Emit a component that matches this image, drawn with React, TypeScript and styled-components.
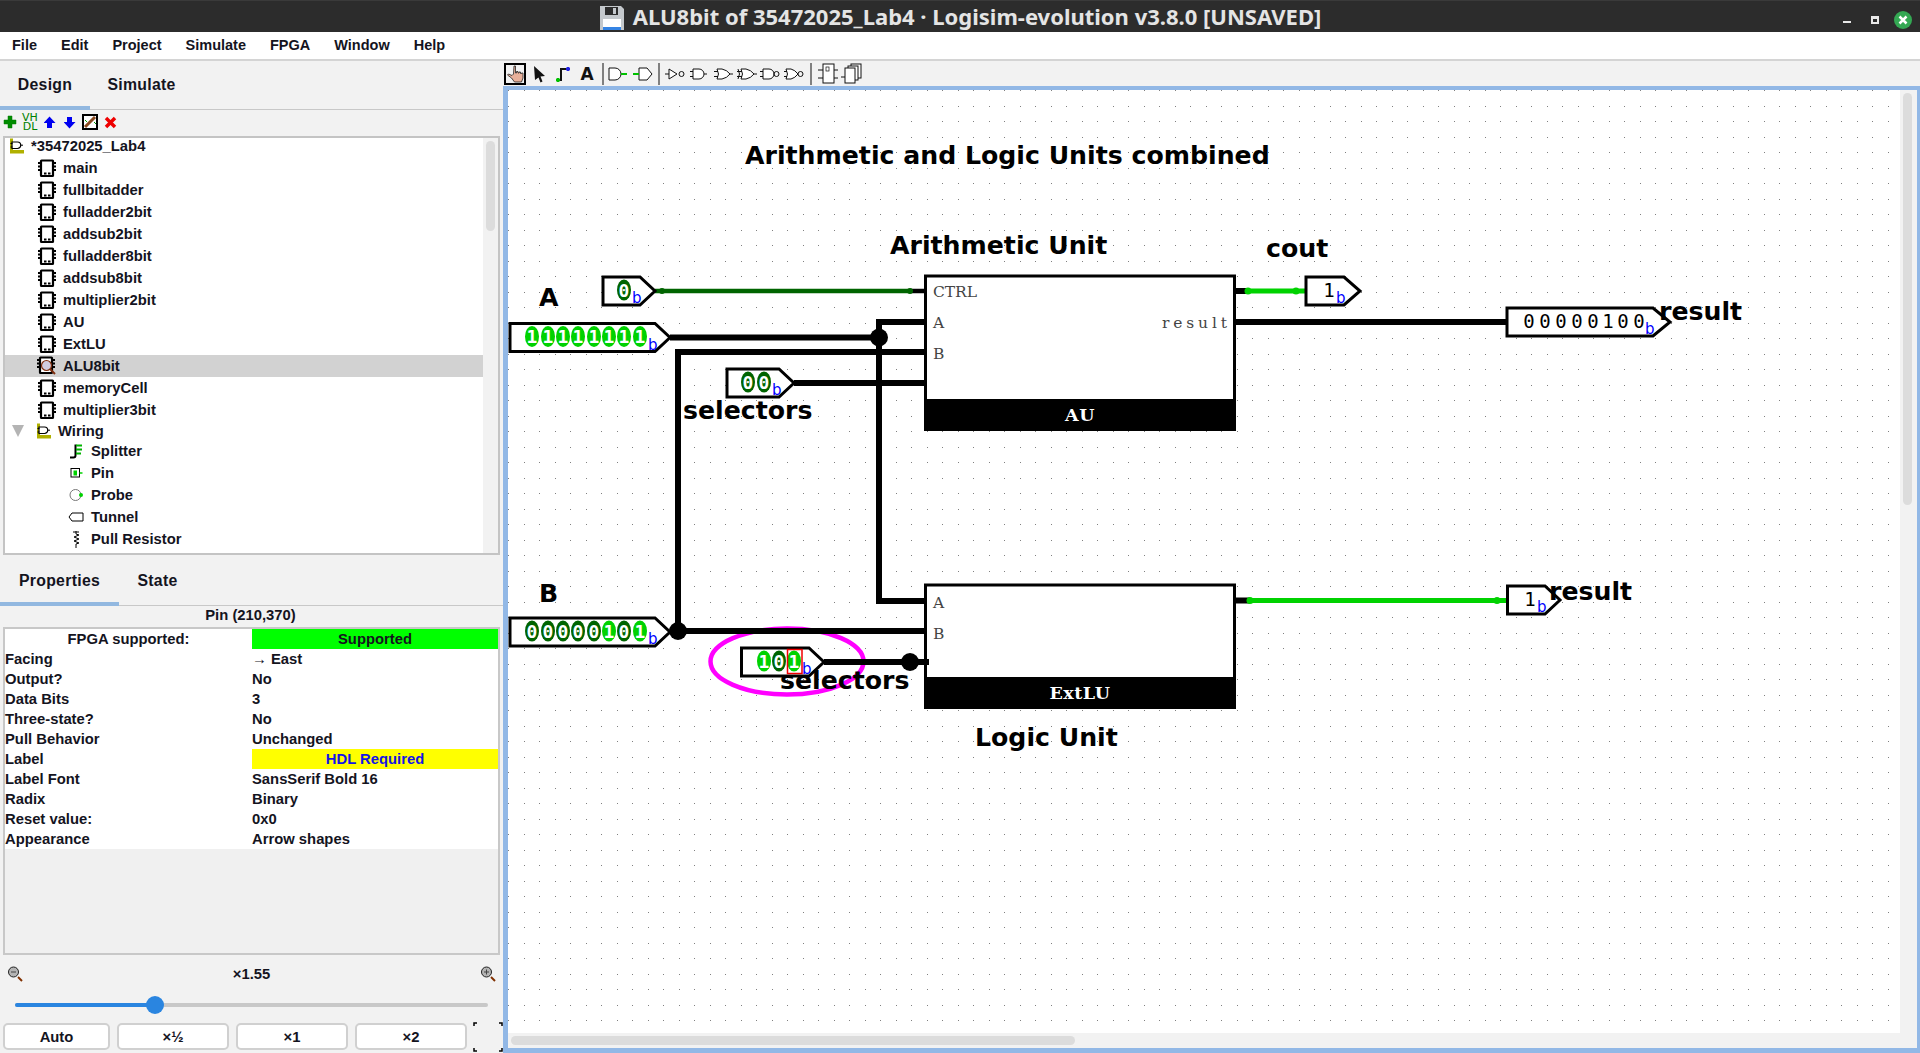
import React from 'react'
import styled, { createGlobalStyle } from 'styled-components'

const GlobalStyle = createGlobalStyle`
    html, body {
        margin: 0;
        padding: 0;
        background: #f2f2f2;
        overflow: hidden;
    }
    * {
        box-sizing: border-box;
    }
`

const Window = styled.div`
    width: 1920px;
    height: 1053px;
    display: flex;
    flex-direction: column;
    overflow: hidden;
    font-family: "Liberation Sans", Arial, sans-serif;
    font-weight: bold;
    font-size: 14.8px;
    color: #14141e;
`

const TitleBar = styled.div`
    height: 32px;
    flex: none;
    display: grid;
    grid-template-columns: 1fr auto 1fr;
    align-items: center;
    background: #2c2c2c;
    border-top: 1px solid #3a3a3a;
`

const TitleText = styled.div`
    grid-column: 2;
    display: flex;
    align-items: center;
    gap: 8px;
    padding-bottom: 3px;
    color: #e4e4e4;
    font-family: "Noto Sans", sans-serif;
    font-size: 22px;
    white-space: nowrap;
`

const TitleLabel = styled.span`
    margin-bottom: 4px;
`

const WindowControls = styled.div`
    justify-self: end;
    display: flex;
    align-items: center;
    padding-right: 8px;
`

const MinimizeBtn = styled.div`
    width: 8px;
    height: 2px;
    margin: 5px 20px 0 0;
    background: #e8e8e8;
`

const MaximizeBtn = styled.div`
    width: 8px;
    height: 8px;
    margin-right: 15px;
    border: 2px solid #e8e8e8;
    border-top-width: 3px;
    background: #2c2c2c;
`

const CloseBtn = styled.div`
    width: 18px;
    height: 18px;
    border-radius: 50%;
    background: #34a853;
    display: flex;
    align-items: center;
    justify-content: center;
`

const MenuBar = styled.div`
    height: 29px;
    flex: none;
    display: flex;
    align-items: center;
    background: #fff;
    border-bottom: 2px solid #d4d4d4;
    padding: 0 0 2px 0;
    font-size: 14.5px;
`

const MenuItem = styled.div`
    padding: 0 12px;
`

const Main = styled.div`
    flex: 1;
    display: flex;
    min-height: 0;
`

const Sidebar = styled.div`
    width: 503px;
    flex: none;
    display: flex;
    flex-direction: column;
    background: #f2f2f2;
`

const TabStrip = styled.div<{ $h: number }>`
    height: ${p => p.$h}px;
    flex: none;
    display: flex;
    border-bottom: 1px solid #c8c8c8;
`

const Tab = styled.div<{ $active?: boolean; $w: number; $top?: number }>`
    width: ${p => p.$w}px;
    display: flex;
    align-items: center;
    justify-content: center;
    padding-top: ${p => p.$top ?? 2}px;
    font-size: 15.8px;
    letter-spacing: 0.3px;
    margin-bottom: -1px;
    border-bottom: 4px solid ${p => (p.$active ? '#92b8e0' : 'transparent')};
`

const MiniToolbar = styled.div`
    height: 26px;
    flex: none;
    display: flex;
    align-items: center;
    padding-bottom: 2px;
`

const MiniTool = styled.div`
    width: 20px;
    height: 20px;
    display: flex;
    align-items: center;
    justify-content: center;
`

const VhdlMark = styled.span`
    text-align: center;
    font-family: "DejaVu Sans", sans-serif;
    font-weight: normal;
    font-size: 11px;
    line-height: 9px;
    color: #008000;
`

const Tree = styled.div`
    height: 419px;
    flex: none;
    margin: 0 3px;
    display: flex;
    background: #fff;
    border: 2px solid #c4c4c4;
`

const TreeRows = styled.div`
    flex: 1;
    overflow: hidden;
`

const TreeRow = styled.div<{ $indent: number; $h?: number; $selected?: boolean; $bottom?: number }>`
    height: ${p => p.$h ?? 22}px;
    display: flex;
    align-items: center;
    padding-left: ${p => p.$indent}px;
    padding-bottom: ${p => p.$bottom ?? 0}px;
    background: ${p => (p.$selected ? '#d2d2d2' : 'transparent')};
    white-space: nowrap;
`

const RowIcon = styled.span<{ $gap: number }>`
    width: 22px;
    margin-right: ${p => p.$gap}px;
    display: flex;
    align-items: center;
    justify-content: center;
    flex: none;
`

const LibraryName = styled.span`
    margin-left: 6px;
`

const Triangle = styled.span`
    width: 0;
    height: 0;
    margin: 0 12px 0 7px;
    border-left: 6.5px solid transparent;
    border-right: 6.5px solid transparent;
    border-top: 12px solid #b4b4b4;
`

const ScrollTrackV = styled.div`
    width: 15px;
    flex: none;
    background: #f2f2f2;
    padding: 3px 3px 0;
`

const ScrollThumbV = styled.div<{ $h: number }>`
    height: ${p => p.$h}px;
    border-radius: 5px;
    background: #dcdcdc;
`

const PropTitle = styled.div`
    height: 21px;
    flex: none;
    display: flex;
    align-items: center;
    justify-content: center;
    padding: 0 2px 4px 0;
`

const PropTable = styled.div`
    height: 328px;
    flex: none;
    margin: 0 3px;
    background: #f0f0f0;
    border: 2px solid #c8c8c8;
`

const PropRow = styled.div`
    height: 20px;
    display: grid;
    grid-template-columns: 247px 246px;
    background: #fff;
`

const PropCell = styled.div<{ $bg?: string; $center?: boolean; $color?: string }>`
    display: flex;
    align-items: center;
    background: ${p => p.$bg ?? 'transparent'};
    color: ${p => p.$color ?? 'inherit'};
    justify-content: ${p => (p.$center ? 'center' : 'flex-start')};
    white-space: nowrap;
`

const ZoomHeader = styled.div`
    height: 38px;
    flex: none;
    padding: 0 7px;
    display: flex;
    align-items: center;
    justify-content: space-between;
`

const SliderTrack = styled.div`
    position: relative;
    height: 4px;
    flex: none;
    margin: 10px 15px 0;
    width: 473px;
    border-radius: 2px;
    background: #c8c8c8;
`

const SliderFill = styled.div`
    height: 100%;
    border-radius: 2px;
    background: #2a85e0;
`

const SliderThumb = styled.div`
    position: absolute;
    top: -7px;
    width: 18px;
    height: 18px;
    margin-left: -9px;
    border-radius: 50%;
    background: #2a85e0;
`

const ZoomButtons = styled.div`
    display: flex;
    gap: 7px;
    margin: 16px 0 0 3px;
`

const ZoomButton = styled.div<{ $w: number }>`
    width: ${p => p.$w}px;
    height: 27px;
    display: flex;
    align-items: center;
    justify-content: center;
    background: #fff;
    border: 2px solid #d0d0d0;
    border-radius: 5px;
`

const Corners = styled.svg`
    flex: none;
    margin: -1px 0 0 -1px;
`

const CanvasColumn = styled.div`
    flex: 1;
    min-width: 0;
    display: flex;
    flex-direction: column;
`

const CanvasToolbar = styled.div`
    height: 25px;
    flex: none;
    display: flex;
    align-items: center;
    background: #f2f2f2;
`

const ToolSlot = styled.div<{ $active?: boolean }>`
    width: 24px;
    height: 24px;
    flex: none;
    display: flex;
    align-items: center;
    justify-content: center;
    ${p => (p.$active ? 'border: 2px solid #000; width: 22px; height: 22px; margin: 0 1px;' : '')}
`

const ToolSeparator = styled.div`
    width: 2px;
    height: 22px;
    margin: 0 3px;
    background: #808080;
`

const ToolLetter = styled.span`
    font-family: "DejaVu Sans", sans-serif;
    font-size: 17px;
    color: #111;
`

const CanvasFrame = styled.div`
    flex: 1;
    min-height: 0;
    display: grid;
    grid-template-columns: 1392px 17px;
    grid-template-rows: 943px 15px;
    border: solid #92b8e6;
    border-width: 4px 3px 5px 5px;
    background: #f2f2f2;
`

const CircuitSvg = styled.svg`
    display: block;
    background: #fff;
`

const ScrollTrackH = styled.div`
    padding: 3px 0 0 3px;
    grid-column: 1;
    grid-row: 2;
`

const ScrollThumbH = styled.div<{ $w: number }>`
    width: ${p => p.$w}px;
    height: 9px;
    border-radius: 5px;
    background: #dcdcdc;
`

const CanvasScrollV = styled.div`
    grid-column: 2;
    grid-row: 1;
    padding: 3px 5px 0 3px;
`

const HeadingText = styled.text`
    font-family: "DejaVu Sans", sans-serif;
    font-weight: bold;
    font-size: 25.2px;
    fill: #000;
`

const PortText = styled.text`
    font-family: "DejaVu Serif", serif;
    font-weight: normal;
    font-size: 15.5px;
    fill: #444;
`

const BlockName = styled.text`
    font-family: "DejaVu Serif", serif;
    font-weight: bold;
    font-size: 17.5px;
    letter-spacing: 0.5px;
    fill: #fff;
    text-anchor: middle;
`

const BitText = styled.text<{ $fill: string }>`
    font-family: "DejaVu Sans Mono", monospace;
    font-weight: bold;
    font-size: 18px;
    fill: ${p => p.$fill};
    text-anchor: middle;
`

const OutputBit = styled.text`
    font-family: "DejaVu Sans Mono", monospace;
    font-weight: normal;
    font-size: 19px;
    fill: #000;
    text-anchor: middle;
`

const RadixText = styled.text`
    font-family: "DejaVu Sans", sans-serif;
    font-weight: normal;
    font-size: 15px;
    fill: #0000ff;
`

const ON = '#00d200'
const OFF = '#006400'

const ChipIcon = () => (
    <svg width="18" height="19" viewBox="0 0 18 19">
        <rect x="3" y="1.5" width="12" height="15.5" rx="0.5" fill="#fff" stroke="#000" strokeWidth="2.2" />
        <path d="M0 4h3M0 7.500h3M0 11h3M15 4h3M15 7.500h3M15 11h3M6 14.500h2.500M10 14.500h2.500" stroke="#000" strokeWidth="1.800" />
    </svg>
)

const ActiveChipIcon = () => (
    <svg width="20" height="20" viewBox="0 0 20 20">
        <rect x="3" y="1.5" width="12" height="15.5" rx="0.5" fill="#fff" stroke="#000" strokeWidth="2.2" />
        <path d="M0 4h3M0 7.500h3M0 11h3M15 4h3M15 7.500h3M15 11h3" stroke="#000" strokeWidth="1.800" />
        <circle cx="9.5" cy="9.5" r="5" fill="#d0cce0" stroke="#803010" strokeWidth="1.2" />
        <path d="M13 13l5 5" stroke="#803010" strokeWidth="2" />
    </svg>
)

const LibraryIcon = () => (
    <svg width="16" height="16" viewBox="0 0 16 16">
        <path d="M1 0.500h3v11.500h11v3.500H1z" fill="#b0b000" />
        <path d="M3 4h5.500a3 3 0 0 1 0 6.500H3z" fill="#fff" stroke="#000" strokeWidth="1.2" />
        <path d="M11.500 7.200h2.500M1.500 5.500h2M1.500 9h2" stroke="#000" strokeWidth="1" />
    </svg>
)

const SplitterIcon = () => (
    <svg width="14" height="16" viewBox="0 0 14 16">
        <path d="M1 14.5h3.5a2 2 0 0 0 2-2V1.5" fill="none" stroke="#000" strokeWidth="2" />
        <path d="M7 2.5h6M7 6.5h6M7 10.5h5" stroke="#00b400" strokeWidth="2" />
    </svg>
)

const PinIcon = () => (
    <svg width="13" height="12" viewBox="0 0 13 12">
        <rect x="1" y="1.5" width="8.5" height="8.5" fill="#fff" stroke="#000" />
        <rect x="3.5" y="3.5" width="3.5" height="5" fill={ON} />
        <path d="M9.5 6h3" stroke={ON} strokeWidth="1.5" />
    </svg>
)

const ProbeIcon = () => (
    <svg width="15" height="14" viewBox="0 0 15 14">
        <circle cx="6.5" cy="7" r="5.5" fill="#fff" stroke="#777" />
        <circle cx="12" cy="7" r="2" fill={ON} />
    </svg>
)

const TunnelIcon = () => (
    <svg width="16" height="10" viewBox="0 0 16 10">
        <path d="M15 1H4L1 5l3 4h11z" fill="#fff" stroke="#000" />
    </svg>
)

const ResistorIcon = () => (
    <svg width="10" height="17" viewBox="0 0 10 17">
        <path d="M5 0v3l3 1-5 2 5 2-5 2 5 2-3 1v4M2 1h6" fill="none" stroke="#000" />
    </svg>
)

const PlusIcon = () => (
    <svg width="14" height="14" viewBox="0 0 14 14">
        <path d="M5 1h4v4h4v4H9v4H5V9H1V5h4z" fill="#008c00" stroke="#007800" strokeWidth="0.5" />
    </svg>
)

const ArrowIcon = ({ down }: { down?: boolean }) => (
    <svg width="13" height="13" viewBox="1 0 13 13">
        <path d={down ? 'M4 1h5v5h3.500L6.500 12.500 0.500 6H4z' : 'M4 12h5V7h3.500L6.500 0.500 0.500 7H4z'} fill="#0000f0" />
    </svg>
)

const EditIcon = () => (
    <svg width="16" height="16" viewBox="0 0 16 16">
        <rect x="1" y="1" width="14" height="14" fill="#fff" stroke="#000" strokeWidth="2" />
        <path d="M3 13L13 3" stroke="#8a4a20" strokeWidth="3" />
        <path d="M3 6l2 2M12 8l2 2" stroke="#00a000" strokeWidth="1" />
    </svg>
)

const CrossIcon = () => (
    <svg width="13" height="13" viewBox="0 0 13 13">
        <path d="M2 2l9 9M11 2l-9 9" stroke="#ee0000" strokeWidth="3.5" />
    </svg>
)

const MagnifierIcon = ({ plus }: { plus?: boolean }) => (
    <svg width="16" height="16" viewBox="0 0 16 16">
        <circle cx="6.500" cy="6" r="5" fill="#b4b4b4" stroke="#222" />
        <path d={plus ? 'M4 6h5M6.500 3.500v5' : 'M4 6h5'} stroke="#444" strokeWidth="1" />
        <path d="M11 11l4 4" stroke="#803000" strokeWidth="2" />
    </svg>
)

const CornersIcon = () => (
    <Corners width="30" height="30" viewBox="0 0 30 30">
        <path d="M1 4V1h3M26 1h3v3M1 26v3h3M26 29h3v-3" fill="none" stroke="#000" strokeWidth="1.500" />
    </Corners>
)

const FloppyIcon = () => (
    <svg width="26" height="26" viewBox="0 0 26 26">
        <path d="M1 1h21l3 3v21H1z" fill="#c4c8cc" />
        <rect x="6" y="2" width="13" height="8" fill="#2c2c2c" />
        <rect x="14" y="3" width="3" height="6" fill="#c4c8cc" />
        <rect x="4" y="14" width="18" height="11" fill="#fff" />
        <rect x="4" y="22" width="18" height="3" fill="#3584e4" />
    </svg>
)

const HandIcon = () => (
    <svg width="18" height="18" viewBox="0 0 18 18">
        <path d="M8 1h1.500v7h1V6.500H12V8h1V7h1.500v1.500h1V8H17v5l-1.500 4h-7l-3-4-4-3 1-1 3.500 1.500L7.500 9z" fill="#e8b09a" stroke="#222" strokeWidth="0.8" />
    </svg>
)

const SelectIcon = () => (
    <svg width="16" height="18" viewBox="0 0 16 18">
        <path d="M3 1l11 10-4.500 0.500 2 5-2 1-2-5L4 15z" fill="#111" />
    </svg>
)

const WireIcon = () => (
    <svg width="18" height="18" viewBox="0 0 18 18">
        <path d="M4 15h3V4h7" fill="none" stroke="#111" strokeWidth="2" />
        <path d="M2 15h4M4 13v4" stroke="#00c000" strokeWidth="2.500" />
        <path d="M12 4h4M14 2v4" stroke="#2020e0" strokeWidth="2.500" />
    </svg>
)

const GateIcon = ({ d, extra, green }: { d: string; extra?: string; green?: string }) => (
    <svg width="24" height="20" viewBox="0 0 24 20">
        <path d={d} fill="#fff" stroke="#111" strokeWidth="1" />
        {extra && <path d={extra} fill="none" stroke="#111" strokeWidth="1" />}
        {green && <path d={green} fill="none" stroke="#00c000" strokeWidth="2" />}
    </svg>
)

const AND_PATH = 'M6 5h6a5 5 0 0 1 0 10H6z'
const OR_PATH = 'M6 5h5q5 1 8 5-3 4-8 5H6q3-5 0-10z'

const FlipFlopIcon = () => (
    <svg width="24" height="22" viewBox="-2 0 24 22">
        <rect x="6" y="1" width="11" height="19" fill="#fff" stroke="#111" />
        <rect x="9" y="4" width="3" height="4" fill="#fff" stroke="#111" strokeWidth="0.7" />
        <path d="M1 7h5M1 15h5M17 7h4M17 15h4" stroke="#111" />
    </svg>
)

const ChipStackIcon = () => (
    <svg width="24" height="22" viewBox="-1 0 24 22">
        <rect x="11" y="1" width="10" height="14" fill="#fff" stroke="#111" />
        <rect x="8" y="3" width="10" height="14" fill="#fff" stroke="#111" />
        <rect x="5" y="5" width="10" height="15" fill="#fff" stroke="#111" />
        <path d="M1 14h4" stroke="#111" />
    </svg>
)

const WireLine = styled.path<{ $color?: string; $w?: number }>`
    fill: none;
    stroke: ${p => p.$color ?? '#000'};
    stroke-width: ${p => p.$w ?? 6}px;
    stroke-linecap: butt;
`

const PinShape = styled.path`
    fill: #fff;
    stroke: #000;
    stroke-width: 3px;
`

const Junction = styled.circle<{ $color?: string }>`
    fill: ${p => p.$color ?? '#000'};
`

const BlockBody = styled.rect`
    fill: #fff;
    stroke: #000;
    stroke-width: 3px;
`

const pinPath = (left: number, top: number, shoulder: number, tip: number) =>
    `M${left} ${top}H${shoulder}L${tip} ${top + 14}L${shoulder} ${top + 28}H${left}Z`

// input pin: a row of lit/unlit bits with the radix mark after them
const InputPin = ({ left, top, shoulder, tip, bits, xs, rx }: {
    left: number; top: number; shoulder: number; tip: number; bits: string; xs: number[]; rx: number
}) => (
    <g>
        <PinShape d={pinPath(left, top, shoulder, tip)} />
        {bits.split('').map((bit, i) => (
            <g key={i}>
                <ellipse cx={xs[i]} cy={top + 13} rx="7" ry="10.500" fill={bit === '1' ? ON : OFF} />
                <BitText x={xs[i]} y={top + 19.500} $fill="#fff">{bit}</BitText>
            </g>
        ))}
        <RadixText x={rx} y={top + 26}>b</RadixText>
    </g>
)

const OutputPin = ({ left, top, shoulder, tip, bits, xs, rx }: {
    left: number; top: number; shoulder: number; tip: number; bits: string; xs: number[]; rx: number
}) => (
    <g>
        <PinShape d={pinPath(left, top, shoulder, tip)} />
        {bits.split('').map((bit, i) => (
            <OutputBit key={i} x={xs[i]} y={top + 19.500}>{bit}</OutputBit>
        ))}
        <RadixText x={rx} y={top + 26}>b</RadixText>
    </g>
)

const eightBits = [532, 548, 563, 578, 594, 609, 624, 640]

const gridDots = () => {
    let d = ''
    for (let x = 0; x < 1392; x += 15.5) {
        for (let y = 0; y < 943; y += 15.5) {
            d += `M${Math.round(x)} ${Math.round(y)}h1v1h-1z`
        }
    }
    return d
}

const Circuit = () => (
    <CircuitSvg width="1392" height="943" viewBox="508 90 1392 943">
        <path d={gridDots()} fill="#808080" transform="translate(508 90)" />

        <ellipse cx="787" cy="661.500" rx="76.500" ry="33" fill="none" stroke="#ff00ff" strokeWidth="4.500" />

        <HeadingText x="745" y="164">Arithmetic and Logic Units combined</HeadingText>
        <HeadingText x="890" y="254">Arithmetic Unit</HeadingText>
        <HeadingText x="1266" y="257">cout</HeadingText>
        <HeadingText x="539" y="306">A</HeadingText>
        <HeadingText x="539" y="602">B</HeadingText>
        <HeadingText x="975" y="746">Logic Unit</HeadingText>

        {/* AU block */}
        <BlockBody x="925.500" y="276" width="309" height="125" />
        <rect x="924" y="399" width="312" height="32" fill="#000" />
        <BlockName x="1080" y="421">AU</BlockName>
        <PortText x="933" y="297" textLength="44" lengthAdjust="spacing">CTRL</PortText>
        <PortText x="933" y="328">A</PortText>
        <PortText x="933" y="359">B</PortText>
        <PortText x="1162" y="328" textLength="65" lengthAdjust="spacing">result</PortText>

        {/* ExtLU block */}
        <BlockBody x="925.500" y="585" width="309" height="94" />
        <rect x="924" y="677" width="312" height="32" fill="#000" />
        <BlockName x="1080" y="699">ExtLU</BlockName>
        <PortText x="933" y="608">A</PortText>
        <PortText x="933" y="639">B</PortText>

        {/* wires */}
        <WireLine d="M655 291H910" $color={OFF} $w={4.500} />
        <WireLine d="M910 291H925" $w={4.500} />
        <WireLine d="M670 337.500H879M879 320V601M876 322H925M876 601H925" />
        <WireLine d="M678 352V631M675 352H925" />
        <WireLine d="M670 631H925" />
        <WireLine d="M794 383H925" />
        <WireLine d="M824 662H929" />
        <WireLine d="M1235 291H1250" />
        <WireLine d="M1248 291H1306" $color={ON} $w={5} />
        <WireLine d="M1235 322H1507" />
        <WireLine d="M1235 600.500H1250" />
        <WireLine d="M1250 600.500H1507" $color={ON} $w={5} />
        <Junction cx="662" cy="291" r="3" $color={OFF} />
        <Junction cx="910" cy="291" r="3" $color={OFF} />
        <Junction cx="1248" cy="291" r="3.500" $color={ON} />
        <Junction cx="1296" cy="291" r="3.500" $color={ON} />
        <Junction cx="1250" cy="600.500" r="3.500" $color={ON} />
        <Junction cx="1497" cy="600.500" r="3.500" $color={ON} />
        <Junction cx="879" cy="337.500" r="9" />
        <Junction cx="678" cy="631" r="9" />
        <Junction cx="910" cy="662" r="9" />

        <InputPin left={603} top={277} shoulder={640} tip={655} bits="0" xs={[624]} rx={632} />
        <InputPin left={510} top={323.500} shoulder={655} tip={670} bits="11111111" xs={eightBits} rx={648} />
        <InputPin left={727} top={369} shoulder={779} tip={794} bits="00" xs={[748, 764]} rx={772} />
        <InputPin left={510} top={618} shoulder={655} tip={670} bits="00000101" xs={eightBits} rx={648} />
        <InputPin left={741.500} top={648} shoulder={809} tip={824} bits="101" xs={[764, 779, 794]} rx={802} />
        <rect x="787.500" y="649.500" width="14.500" height="24" fill="none" stroke="#f00000" strokeWidth="1.500" />

        <OutputPin left={1306} top={277} shoulder={1344} tip={1360} bits="1" xs={[1329]} rx={1336} />
        <OutputPin left={1507} top={308} shoulder={1653} tip={1670} bits="00000100" xs={[1529, 1545, 1561, 1577, 1593, 1608, 1623, 1639]} rx={1645} />
        <OutputPin left={1507.500} top={586} shoulder={1545} tip={1560} bits="1" xs={[1530]} rx={1537} />

        <HeadingText x="683" y="419">selectors</HeadingText>
        <HeadingText x="780" y="689">selectors</HeadingText>
        <HeadingText x="1659" y="320">result</HeadingText>
        <HeadingText x="1549" y="600">result</HeadingText>
    </CircuitSvg>
)

const menus = ['File', 'Edit', 'Project', 'Simulate', 'FPGA', 'Window', 'Help']
const circuits = ['main', 'fullbitadder', 'fulladder2bit', 'addsub2bit', 'fulladder8bit', 'addsub8bit', 'multiplier2bit', 'AU', 'ExtLU', 'ALU8bit', 'memoryCell', 'multiplier3bit']

const wiring: [string, React.ReactNode][] = [
    ['Splitter', <SplitterIcon />],
    ['Pin', <PinIcon />],
    ['Probe', <ProbeIcon />],
    ['Tunnel', <TunnelIcon />],
    ['Pull Resistor', <ResistorIcon />],
]

const properties: [string, string][] = [
    ['Facing', '→ East'],
    ['Output?', 'No'],
    ['Data Bits', '3'],
    ['Three-state?', 'No'],
    ['Pull Behavior', 'Unchanged'],
    ['Label', 'HDL Required'],
    ['Label Font', 'SansSerif Bold 16'],
    ['Radix', 'Binary'],
    ['Reset value:', '0x0'],
    ['Appearance', 'Arrow shapes'],
]

const ZOOM_POSITION = 140 / 473

const App: React.FC = () => (
    <Window>
        <GlobalStyle />
        <TitleBar>
            <TitleText>
                <FloppyIcon />
                <TitleLabel>ALU8bit of 35472025_Lab4 · Logisim-evolution v3.8.0 [UNSAVED]</TitleLabel>
            </TitleText>
            <WindowControls>
                <MinimizeBtn />
                <MaximizeBtn />
                <CloseBtn>
                    <svg width="10" height="10" viewBox="0 0 10 10">
                        <path d="M1.500 1.500l7 7M8.500 1.500l-7 7" stroke="#fff" strokeWidth="2.500" />
                    </svg>
                </CloseBtn>
            </WindowControls>
        </TitleBar>
        <MenuBar>
            {menus.map(m => <MenuItem key={m}>{m}</MenuItem>)}
        </MenuBar>
        <Main>
            <Sidebar>
                <TabStrip $h={49}>
                    <Tab $active $w={90}>Design</Tab>
                    <Tab $w={103}>Simulate</Tab>
                </TabStrip>
                <MiniToolbar>
                    <MiniTool><PlusIcon /></MiniTool>
                    <MiniTool><VhdlMark>VH<br />DL</VhdlMark></MiniTool>
                    <MiniTool><ArrowIcon /></MiniTool>
                    <MiniTool><ArrowIcon down /></MiniTool>
                    <MiniTool><EditIcon /></MiniTool>
                    <MiniTool><CrossIcon /></MiniTool>
                </MiniToolbar>
                <Tree>
                    <TreeRows>
                        <TreeRow $indent={4} $h={19} $bottom={3}>
                            <LibraryIcon />
                            <LibraryName>*35472025_Lab4</LibraryName>
                        </TreeRow>
                        {circuits.map(c => (
                            <TreeRow key={c} $indent={31} $selected={c === 'ALU8bit'}>
                                <RowIcon $gap={5}>{c === 'ALU8bit' ? <ActiveChipIcon /> : <ChipIcon />}</RowIcon>
                                {c}
                            </TreeRow>
                        ))}
                        <TreeRow $indent={0} $h={19}>
                            <Triangle />
                            <LibraryIcon />
                            <LibraryName>Wiring</LibraryName>
                        </TreeRow>
                        {wiring.map(([name, icon]) => (
                            <TreeRow key={name} $indent={60}>
                                <RowIcon $gap={4}>{icon}</RowIcon>
                                {name}
                            </TreeRow>
                        ))}
                    </TreeRows>
                    <ScrollTrackV>
                        <ScrollThumbV $h={90} />
                    </ScrollTrackV>
                </Tree>
                <TabStrip $h={51}>
                    <Tab $active $w={119} $top={4}>Properties</Tab>
                    <Tab $w={77} $top={4}>State</Tab>
                </TabStrip>
                <PropTitle>Pin (210,370)</PropTitle>
                <PropTable>
                    <PropRow>
                        <PropCell $center>FPGA supported:</PropCell>
                        <PropCell $center $bg="#00ff00">Supported</PropCell>
                    </PropRow>
                    {properties.map(([k, v]) => (
                        <PropRow key={k}>
                            <PropCell>{k}</PropCell>
                            {v === 'HDL Required'
                                ? <PropCell $center $bg="#ffff00" $color="#1414e6">{v}</PropCell>
                                : <PropCell>{v}</PropCell>}
                        </PropRow>
                    ))}
                </PropTable>
                <ZoomHeader>
                    <MagnifierIcon />
                    <span>×1.55</span>
                    <MagnifierIcon plus />
                </ZoomHeader>
                <SliderTrack>
                    <SliderFill style={{ width: `${ZOOM_POSITION * 100}%` }} />
                    <SliderThumb style={{ left: `${ZOOM_POSITION * 100}%` }} />
                </SliderTrack>
                <ZoomButtons>
                    <ZoomButton $w={107}>Auto</ZoomButton>
                    <ZoomButton $w={112}>×½</ZoomButton>
                    <ZoomButton $w={112}>×1</ZoomButton>
                    <ZoomButton $w={112}>×2</ZoomButton>
                    <CornersIcon />
                </ZoomButtons>
            </Sidebar>
            <CanvasColumn>
                <CanvasToolbar>
                    <ToolSlot $active><HandIcon /></ToolSlot>
                    <ToolSlot><SelectIcon /></ToolSlot>
                    <ToolSlot><WireIcon /></ToolSlot>
                    <ToolSlot><ToolLetter>A</ToolLetter></ToolSlot>
                    <ToolSeparator />
                    <ToolSlot><GateIcon d="M2 4h6a6 6 0 0 1 0 12H2z" green="M14 10h6" /></ToolSlot>
                    <ToolSlot><GateIcon d="M8 4h8l5 6-5 6H8z" green="M2 10h6" /></ToolSlot>
                    <ToolSeparator />
                    <ToolSlot><GateIcon d="M6 5l8 5-8 5z" extra="M2 10h4M21 10a2.500 2.500 0 1 1-5 0 2.500 2.500 0 1 1 5 0" /></ToolSlot>
                    <ToolSlot><GateIcon d={AND_PATH} extra="M3 7.500h3M3 12.500h3M17 10h3" /></ToolSlot>
                    <ToolSlot><GateIcon d={OR_PATH} extra="M3 7.500h4M3 12.500h4M19 10h3" /></ToolSlot>
                    <ToolSlot><GateIcon d={OR_PATH} extra="M3 5q3 5 0 10M2 7.500h5M2 12.500h5M19 10h3" /></ToolSlot>
                    <ToolSlot><GateIcon d="M4 5h6a5 5 0 0 1 0 10H4z" extra="M1 7.500h3M1 12.500h3M20 10a2.500 2.500 0 1 1-5 0 2.500 2.500 0 1 1 5 0" /></ToolSlot>
                    <ToolSlot><GateIcon d="M3 5h5q4 1 7 5-3 4-7 5H3q3-5 0-10z" extra="M1 7.500h3M1 12.500h3M20 10a2.500 2.500 0 1 1-5 0 2.500 2.500 0 1 1 5 0" /></ToolSlot>
                    <ToolSeparator />
                    <ToolSlot><FlipFlopIcon /></ToolSlot>
                    <ToolSlot><ChipStackIcon /></ToolSlot>
                </CanvasToolbar>
                <CanvasFrame>
                    <Circuit />
                    <CanvasScrollV>
                        <ScrollThumbV $h={412} />
                    </CanvasScrollV>
                    <ScrollTrackH>
                        <ScrollThumbH $w={564} />
                    </ScrollTrackH>
                </CanvasFrame>
            </CanvasColumn>
        </Main>
    </Window>
)

export default App
